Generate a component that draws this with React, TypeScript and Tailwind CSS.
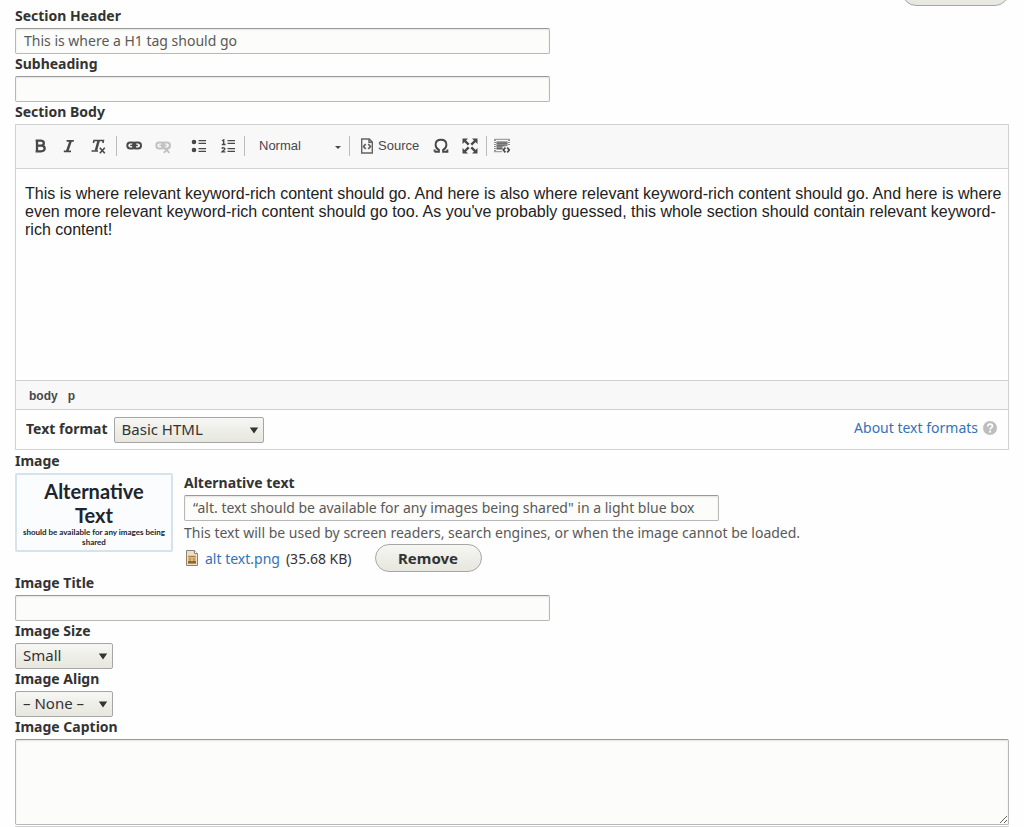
import type { ReactNode } from 'react';

const BODY_TEXT =
  "This is where relevant keyword-rich content should go. And here is also where relevant keyword-rich content should go. And here is where even more relevant keyword-rich content should go too. As you've probably guessed, this whole section should contain relevant keyword-rich content!";

const inputClass =
  'block h-[26px] w-[535px] max-w-full rounded-[2px] border border-[#b8b8b8] border-t-[#999999] bg-[#fcfcfa] px-2 pb-[2px] text-[14px] text-[#595959] shadow-[inset_0_1px_2px_rgba(0,0,0,0.1)] focus:outline-none';

const pillClass =
  'h-7 shrink-0 rounded-full border border-[#a6a6a6] bg-linear-to-b from-[#f6f6f3] to-[#e7e7df] text-[15px] font-bold text-[#333333]';

interface LabelProps {
  htmlFor: string;
  children: ReactNode;
}

function Label({ htmlFor, children }: LabelProps) {
  return (
    <label htmlFor={htmlFor} className="block h-[22px] text-[14px] leading-5 font-bold text-[#333333]">
      {children}
    </label>
  );
}

interface TextFieldProps {
  id: string;
  label: string;
  value?: string;
}

function TextField({ id, label, value = '' }: TextFieldProps) {
  return (
    <div>
      <Label htmlFor={id}>{label}</Label>
      <input id={id} type="text" defaultValue={value} className={inputClass} />
    </div>
  );
}

interface SelectProps {
  id: string;
  options: string[];
  width: string;
}

function Select({ id, options, width }: SelectProps) {
  return (
    <div className={`relative ${width}`}>
      <select
        id={id}
        className="block h-[26px] w-full appearance-none rounded-[2px] border border-[#a6a6a6] bg-linear-to-b from-[#f6f6f3] to-[#e7e7df] pr-5 pb-[2px] pl-[7px] text-[15px] text-[#333333] focus:outline-none"
      >
        {options.map((option) => (
          <option key={option}>{option}</option>
        ))}
      </select>
      <svg viewBox="0 0 10 7" className="pointer-events-none absolute top-[10px] right-[5px] h-[7px] w-[10px]">
        <path d="M0.8 0.5h8.4L5 6.4z" fill="#333333" />
      </svg>
    </div>
  );
}

interface ToolButtonProps {
  label: string;
  disabled?: boolean;
  children: ReactNode;
}

function ToolButton({ label, disabled, children }: ToolButtonProps) {
  return (
    <button type="button" aria-label={label} disabled={disabled} className="flex h-7 w-[29px] items-center justify-center">
      <svg viewBox="0 0 16 16" className="h-4 w-4" fill="none" stroke="#484848" strokeWidth="2">
        {children}
      </svg>
    </button>
  );
}

function Separator() {
  return <span className="mr-[2px] ml-1 h-5 w-px bg-[#bcbcbc]" />;
}

function ChainLinks() {
  return (
    <>
      <rect x="1.3" y="4.4" width="8" height="6" rx="3" strokeWidth="2" />
      <rect x="7" y="4.4" width="8" height="6" rx="3" strokeWidth="2" />
      <path d="M4.3 7.4h7.6" strokeWidth="1.4" />
    </>
  );
}

function Toolbar() {
  return (
    <div className="flex h-11 items-center border-b border-[#d1d1d1] bg-[#f8f8f8] pb-[2px] pl-[9px] font-['Liberation_Sans',Arial,sans-serif]">
      <ToolButton label="Bold">
        <path d="M5 2.6v10.8M3.6 2.7h5c4.3 0 4.3 5 0 5H5h4.1c4.8 0 4.8 5.6 0 5.6H3.6" strokeWidth="2.3" />
      </ToolButton>
      <ToolButton label="Italic">
        <path d="M5.6 2.8h7.2M2.8 13.4H10" strokeWidth="1.8" />
        <path d="M9.7 2.8L6.1 13.4" strokeWidth="2.5" />
      </ToolButton>
      <ToolButton label="Remove format">
        <path d="M3.4 5l.6-2.5h9.4l-.5 2.5M1.5 13h6.5" strokeWidth="1.6" />
        <path d="M8.7 2.5L5.9 12.5" strokeWidth="2.5" />
        <path d="M9.8 9.8l5 5.4M14.8 9.8l-5 5.4" strokeWidth="1.6" />
      </ToolButton>
      <Separator />
      <ToolButton label="Link">
        <ChainLinks />
      </ToolButton>
      <ToolButton label="Unlink" disabled>
        <g stroke="#c2c2c2">
          <ChainLinks />
          <path d="M8.8 9l5.6 5.8M14.4 9l-5.6 5.8" strokeWidth="1.8" />
        </g>
      </ToolButton>
      <div className="ml-[7px] flex">
        <ToolButton label="Bulleted list">
          <circle cx="3" cy="4" r="2.3" fill="#484848" stroke="none" />
          <circle cx="3" cy="12" r="2.3" fill="#484848" stroke="none" />
          <path d="M7.5 2.7h7.5M7.5 5.4h7.5M7.5 10.6h7.5M7.5 13.3h7.5" strokeWidth="1.3" />
        </ToolButton>
        <ToolButton label="Numbered list">
          <path d="M2 2.8l1.7-.9v4.6M1.8 6.5h3.8" strokeWidth="1.4" />
          <path d="M1.8 10.6c.6-1.2 3.4-1 3 .5-.3 1-2 1.7-2.8 2.8h3.4" strokeWidth="1.4" />
          <path d="M7.5 2.7h7.5M7.5 5.4h7.5M7.5 10.6h7.5M7.5 13.3h7.5" strokeWidth="1.3" />
        </ToolButton>
      </div>
      <span className="ml-[2px] h-5 w-px bg-[#bcbcbc]" />
      <div className="relative mx-1 w-[96px]">
        <select
          aria-label="Paragraph format"
          className="block h-7 w-full appearance-none pl-[10px] text-[13px] text-[#484848] focus:outline-none"
        >
          <option>Normal</option>
          <option>Heading 2</option>
        </select>
        <svg viewBox="0 0 6 3" className="pointer-events-none absolute top-[14px] right-1 h-[3px] w-[6px]">
          <path d="M0 0h6L3 3z" fill="#484848" />
        </svg>
      </div>
      <span className="h-5 w-px bg-[#bcbcbc]" />
      <button type="button" className="ml-[9px] flex h-7 items-center gap-[3px] text-[13px] text-[#484848]">
        <svg viewBox="0 0 16 16" className="h-4 w-4" fill="none" stroke="#636363" strokeWidth="1.4">
          <path d="M2.7 1h7.6l3 3v11H2.7zM10 1v3.3h3.3" />
          <path d="M6.7 6L4.6 8.5 6.7 11M9.3 6l2.1 2.5L9.3 11" strokeWidth="1.8" />
        </svg>
        Source
      </button>
      <div className="ml-[7px] flex">
        <ToolButton label="Special character">
          <path
            d="M1.6 13.8h4.3v-1.9C3.6 10.8 2.6 9 2.6 6.8c0-3 2.1-5 5.4-5s5.4 2 5.4 5c0 2.2-1 4-3.3 5.1v1.9h4.3v-2.2M1.6 13.8v-2.2"
            strokeWidth="1.9"
          />
        </ToolButton>
        <ToolButton label="Maximize">
          <path d="M2.5 2.5l4.2 4.2M13.5 2.5L9.3 6.7M2.5 13.5l4.2-4.2M13.5 13.5L9.3 9.3" strokeWidth="2.4" />
          <path d="M.5.5h5.5L.5 6zM15.5.5V6L10 .5zM.5 15.5V10L6 15.5zM15.5 15.5H10l5.5-5.5z" fill="#484848" stroke="none" />
        </ToolButton>
      </div>
      <span className="ml-[2px] h-5 w-px bg-[#bcbcbc]" />
      <ToolButton label="Show blocks">
        <path d="M.5 1.3h15M.5 13.7h8" strokeWidth="1.2" strokeDasharray="1 1" />
        <path d="M1 2v12M15 2v6" strokeWidth="1.2" strokeDasharray="1 1" />
        <path d="M2.5 3.2h11v5h-5v3.6h-6z" fill="#8a8a8a" stroke="none" />
        <path d="M2.5 5.2h11M2.5 7.8h8M2.5 10.4h6" stroke="#666666" strokeWidth="1" />
        <path d="M11.4 9.6l-2.1 2.4 2.1 2.4M13.2 9.6l2.1 2.4-2.1 2.4" strokeWidth="1.7" />
      </ToolButton>
    </div>
  );
}

function Editor() {
  return (
    <div className="border border-[#d1d1d1]">
      <Toolbar />
      <div
        id="section-body"
        role="textbox"
        aria-label="Section Body"
        contentEditable
        suppressContentEditableWarning
        className="min-h-[211px] pt-4 pr-1 pl-[9px] font-['Liberation_Sans',Arial,sans-serif] text-[16px] leading-[18px] text-[#222222] focus:outline-none"
      >
        <p>{BODY_TEXT}</p>
      </div>
      <div className="flex h-[30px] items-center gap-[10px] border-y border-[#d1d1d1] bg-[#f8f8f8] px-[13px] pt-px font-['Liberation_Sans',Arial,sans-serif] text-[12px] font-bold text-[#484848]">
        <span>body</span>
        <span>p</span>
      </div>
      <div className="flex h-[39px] items-center justify-between pr-[11px] pl-[10px]">
        <div className="flex items-center gap-[6px]">
          <label htmlFor="text-format" className="pb-[2px] text-[14px] font-bold">
            Text format
          </label>
          <Select id="text-format" options={['Basic HTML', 'Full HTML']} width="w-[150px]" />
        </div>
        <a href="#formats" className="flex items-center gap-[5px] pb-1 text-[14px] text-[#3273b8]">
          About text formats
          <svg viewBox="0 0 14 14" className="h-[14px] w-[14px]">
            <circle cx="7" cy="7" r="7" fill="#bebebe" />
            <path d="M4.8 5.4c0-3 4.6-2.8 4.6-.2C9.4 7 7.1 6.7 7.1 8.5" fill="none" stroke="#ffffff" strokeWidth="1.7" />
            <circle cx="7.1" cy="10.7" r="1.1" fill="#ffffff" />
          </svg>
        </a>
      </div>
    </div>
  );
}

function ImageField() {
  return (
    <div className="pb-px">
      <h4 className="h-[22px] text-[14px] leading-[22px] font-bold">Image</h4>
      <div className="flex items-start gap-[11px] pt-px">
        <div className="h-[79px] w-[158px] shrink-0 rounded-[2px] border-2 border-[#d5e3ec] bg-[#fafcfd] pt-1 text-center font-['Lato',sans-serif] font-bold text-[#20242c]">
          <div className="text-[20px] leading-6">
            Alternative
            <br />
            Text
          </div>
          <div className="text-[8px] leading-[10px]">
            should be available for any images being
            <br />
            shared
          </div>
        </div>
        <div className="min-w-0">
          <TextField
            id="alt-text"
            label="Alternative text"
            value={'“alt. text should be available for any images being shared" in a light blue box'}
          />
          <p className="h-[23px] text-[14px] leading-6 text-[#595959]">
            This text will be used by screen readers, search engines, or when the image cannot be loaded.
          </p>
          <div className="flex h-7 items-center text-[14px]">
            <svg viewBox="0 0 16 16" className="mr-[5px] h-4 w-4" fill="none">
              <path d="M2.5.5h8l3 3v12h-11z" fill="#eadfc8" stroke="#8b8378" />
              <path d="M10.5.5v3h3" fill="#ffffff" stroke="#8b8378" />
              <path d="M4 5.5h8v8H4z" fill="#e3b774" />
              <path d="M4.5 6.5h7M5 9h2M9 9h2" stroke="#a27a4a" />
              <path d="M4 13.5v-2l2-1 2 1 2-1 2 1v2z" fill="#87632f" />
            </svg>
            <a href="#alt-text" className="mr-[6px] text-[#3273b8]">
              alt text.png
            </a>
            <span>(35.68 KB)</span>
            <button type="button" className={`${pillClass} ml-[23px] w-[107px]`}>
              Remove
            </button>
          </div>
        </div>
      </div>
    </div>
  );
}

export default function App() {
  return (
    <form className="min-h-screen overflow-hidden bg-[#fefefe] px-[15px] font-['Noto_Sans',sans-serif] text-[#333333]">
      <div className="flex h-[6px] items-end justify-end overflow-hidden">
        <button type="button" aria-label="Remove section" className={`${pillClass} w-[107px]`} />
      </div>
      <TextField id="section-header" label="Section Header" value="This is where a H1 tag should go" />
      <TextField id="subheading" label="Subheading" />
      <Label htmlFor="section-body">Section Body</Label>
      <Editor />
      <ImageField />
      <TextField id="image-title" label="Image Title" />
      <Label htmlFor="image-size">Image Size</Label>
      <Select id="image-size" options={['Small', 'Medium', 'Large']} width="w-[98px]" />
      <Label htmlFor="image-align">Image Align</Label>
      <Select id="image-align" options={['– None –', 'Left', 'Right']} width="w-[98px]" />
      <Label htmlFor="image-caption">Image Caption</Label>
      <textarea
        id="image-caption"
        className="block h-[86px] w-full resize-y rounded-[2px] border border-[#b8b8b8] border-t-[#999999] bg-[#fcfcfa] px-2 py-1 text-[14px] text-[#595959] shadow-[inset_0_1px_2px_rgba(0,0,0,0.1)] focus:outline-none"
      />
      <div className="mt-px h-px bg-[#d1d1d1]" />
    </form>
  );
}
